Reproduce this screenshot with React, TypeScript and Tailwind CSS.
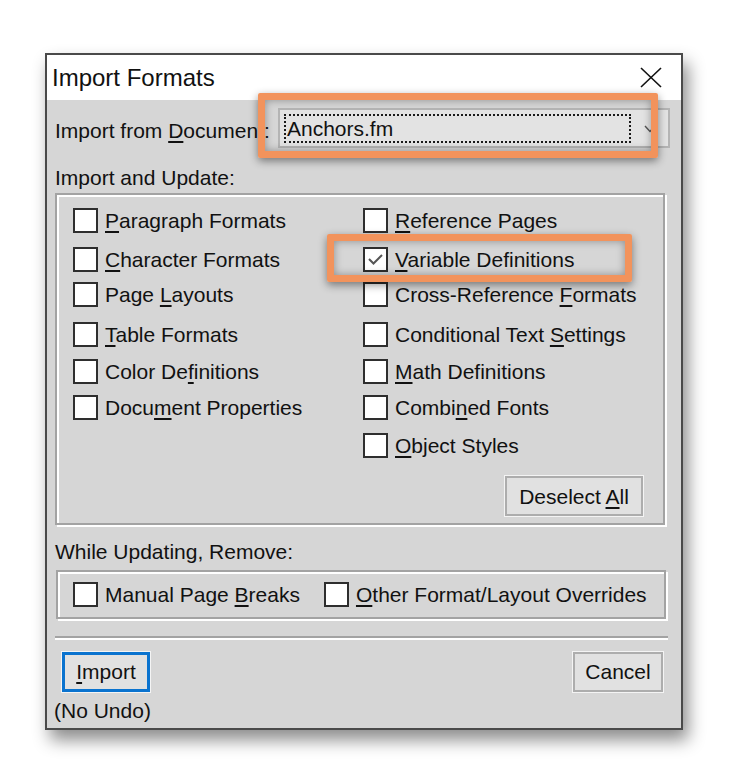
import React from "react";

type Item = { pre: string; key: string; post: string; checked?: boolean };

const leftItems: Item[] = [
  { pre: "", key: "P", post: "aragraph Formats" },
  { pre: "", key: "C", post: "haracter Formats" },
  { pre: "Page ", key: "L", post: "ayouts" },
  { pre: "", key: "T", post: "able Formats" },
  { pre: "Color De", key: "f", post: "initions" },
  { pre: "Docu", key: "m", post: "ent Properties" },
];

const rightItems: Item[] = [
  { pre: "", key: "R", post: "eference Pages" },
  { pre: "", key: "V", post: "ariable Definitions", checked: true },
  { pre: "Cross-Reference ", key: "F", post: "ormats" },
  { pre: "Conditional Text ", key: "S", post: "ettings" },
  { pre: "", key: "M", post: "ath Definitions" },
  { pre: "Combi", key: "n", post: "ed Fonts" },
  { pre: "", key: "O", post: "bject Styles" },
];

function Label({ pre, k, post }: { pre: string; k: string; post: string }) {
  return (
    <span className="whitespace-nowrap">
      {pre}
      <span className="underline decoration-[1.5px] underline-offset-[3px]">{k}</span>
      {post}
    </span>
  );
}

function Box({ checked }: { checked?: boolean }) {
  return (
    <div className="relative h-[25px] w-[25px] shrink-0 border-2 border-[#2e2e2e] bg-white">
      {checked && (
        <svg viewBox="0 0 21 21" className="absolute inset-0 h-full w-full">
          <polyline
            points="4,10 8.5,14.5 17,6"
            fill="none"
            stroke="#555"
            strokeWidth="2"
          />
        </svg>
      )}
    </div>
  );
}

function Check({ item }: { item: Item }) {
  return (
    <div className="flex h-[25px] items-center gap-[7px]">
      <Box checked={item.checked} />
      <Label pre={item.pre} k={item.key} post={item.post} />
    </div>
  );
}

const etched =
  "border-2 border-[#a3a3a3] shadow-[inset_2px_2px_0_#ffffff,2px_2px_0_#ffffff]";

const button =
  "flex h-[40px] items-center justify-center border-2 border-[#adadad] bg-[#e1e1e1] shadow-[0_0_0_1px_#f4f4f4]";

const callout =
  "absolute rounded-[2px] border-[7px] border-[#f2935c] blur-[0.7px] shadow-[0_3px_8px_rgba(0,0,0,0.45),inset_0_0_8px_rgba(0,0,0,0.35)]";

export default function App() {
  return (
    <div className="h-[783px] w-[729px] overflow-hidden bg-white pl-[45px] pt-[53px] font-['Liberation_Sans',Arial,sans-serif] text-[21px] leading-[24px] text-[#111]">
      <div className="relative flex h-[677px] w-[638px] flex-col border-2 border-[#4a4a4a] shadow-[5px_10px_16px_rgba(0,0,0,0.45)]">
        {/* title bar */}
        <div className="flex h-[45px] items-center justify-between bg-white pl-[5px] pr-[19px]">
          <span className="pt-[1px] text-[24px] leading-[28px]">Import Formats</span>
          <svg viewBox="0 0 22 21" className="h-[21px] w-[22px]">
            <line x1="1" y1="1" x2="21" y2="20" stroke="#111" strokeWidth="1.6" />
            <line x1="21" y1="1" x2="1" y2="20" stroke="#111" strokeWidth="1.6" />
          </svg>
        </div>

        {/* body */}
        <div className="flex flex-1 flex-col bg-[#d6d6d6]">
          {/* document row */}
          <div className="mt-[8px] flex h-[40px] items-center pl-[8px]">
            <div className="w-[223px] pt-[5px]">
              <Label pre="Import from " k="D" post="ocument:" />
            </div>
            <div className="flex h-[40px] w-[392px] items-center border-2 border-[#b4b4b4] bg-[#e3e3e3] pl-[4px]">
              <div className="flex h-[29px] w-[347px] items-center border-2 border-dotted border-[#1a1a1a] pl-[1px] pt-[1px]">
                Anchors.fm
              </div>
              <svg viewBox="0 0 12 8" className="ml-[13px] mt-[2px] h-[8px] w-[12px]">
                <polyline points="1,1 6,6.5 11,1" fill="none" stroke="#555" strokeWidth="1.4" />
              </svg>
            </div>
          </div>

          <div className="mt-[18px] pl-[8px]">Import and Update:</div>

          {/* import and update group */}
          <div className={`ml-[8px] mt-[3px] flex h-[332px] w-[610px] flex-col ${etched}`}>
            <div className="mt-[13px] grid grid-cols-[290px_1fr] grid-rows-[39px_35px_40px_37px_36px_38px_25px] pl-[16px]">
              {rightItems.map((r, i) => (
                <React.Fragment key={r.post}>
                  <div>{leftItems[i] ? <Check item={leftItems[i]} /> : null}</div>
                  <div>
                    <Check item={r} />
                  </div>
                </React.Fragment>
              ))}
            </div>
            <div className="mr-[20px] mt-[18px] flex justify-end">
              <div className={`${button} w-[138px]`}>
                <span className="pt-[1px]">
                  <Label pre="Deselect " k="A" post="ll" />
                </span>
              </div>
            </div>
          </div>

          <div className="mt-[15px] pl-[8px]">While Updating, Remove:</div>

          {/* remove group */}
          <div className={`ml-[9px] mt-[6px] flex h-[49px] w-[610px] items-center pl-[15px] ${etched}`}>
            <Check item={{ pre: "Manual Page ", key: "B", post: "reaks" }} />
            <div className="ml-[24px]">
              <Check item={{ pre: "", key: "O", post: "ther Format/Layout Overrides" }} />
            </div>
          </div>

          {/* separator */}
          <div className="ml-[8px] mt-[17px] h-[4px] w-[613px] border-t-2 border-b-2 border-t-[#a3a3a3] border-b-white" />

          {/* buttons */}
          <div className="mt-[12px] flex items-center justify-between pl-[15px] pr-[18px]">
            <div className="flex h-[40px] w-[88px] items-center justify-center border-[3px] border-[#0a73cf] bg-[#e1e1e1] shadow-[0_0_0_1px_#f4f4f4]">
              <Label pre="" k="I" post="mport" />
            </div>
            <div className={`${button} w-[90px]`}>Cancel</div>
          </div>

          <div className="mt-[7px] pl-[7px]">(No Undo)</div>
        </div>

        {/* callout highlights */}
        <div className={`${callout} left-[211px] top-[38px] h-[65px] w-[400px]`} />
        <div className={`${callout} left-[280px] top-[179px] h-[48px] w-[305px]`} />
      </div>
    </div>
  );
}
